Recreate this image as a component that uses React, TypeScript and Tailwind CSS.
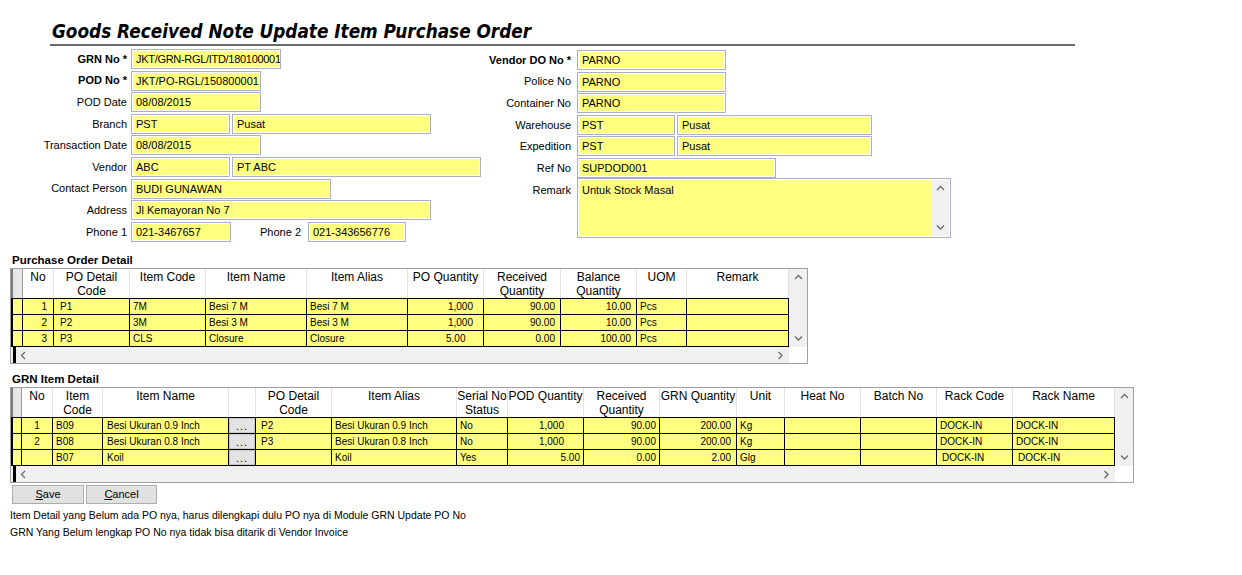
import type { ReactNode } from 'react'

type Col = { w: string; head: string[] }
type Cell = [string, string]

const L = 'text-left pl-[3px]'
const R = 'text-right pr-[5px]'
const R3 = 'text-right pr-[3px]'
const C = 'text-center'

const poCols: Col[] = [
  { w: 'w-[31px]', head: ['No'] },
  { w: 'w-[76px]', head: ['PO Detail', 'Code'] },
  { w: 'w-[76px]', head: ['Item Code'] },
  { w: 'w-[101px]', head: ['Item Name'] },
  { w: 'w-[101px]', head: ['Item Alias'] },
  { w: 'w-[76px]', head: ['PO Quantity'] },
  { w: 'w-[77px]', head: ['Received', 'Quantity'] },
  { w: 'w-[76px]', head: ['Balance', 'Quantity'] },
  { w: 'w-[50px]', head: ['UOM'] },
  { w: 'w-[102px]', head: ['Remark'] },
]

const poRows: Cell[][] = [
  [['1', 'text-right pr-[6px]'], ['P1', 'pl-[6px]'], ['7M', L], ['Besi 7 M', L], ['Besi 7 M', L], ['1,000', 'text-right pr-[10px]'], ['90.00', R], ['10.00', R], ['Pcs', L], ['', L]],
  [['2', 'text-right pr-[6px]'], ['P2', 'pl-[6px]'], ['3M', L], ['Besi 3 M', L], ['Besi 3 M', L], ['1,000', 'text-right pr-[10px]'], ['90.00', R], ['10.00', R], ['Pcs', L], ['', L]],
  [['3', 'text-right pr-[6px]'], ['P3', 'pl-[6px]'], ['CLS', L], ['Closure', L], ['Closure', L], ['5.00', 'text-left pl-[38px]'], ['0.00', R], ['100.00', R], ['Pcs', L], ['', L]],
]

const grnCols: Col[] = [
  { w: 'w-[31px]', head: ['No'] },
  { w: 'w-[50px]', head: ['Item', 'Code'] },
  { w: 'w-[126px]', head: ['Item Name'] },
  { w: 'w-[27px]', head: [''] },
  { w: 'w-[76px]', head: ['PO Detail', 'Code'] },
  { w: 'w-[125px]', head: ['Item Alias'] },
  { w: 'w-[51px]', head: ['Serial No', 'Status'] },
  { w: 'w-[76px]', head: ['POD Quantity'] },
  { w: 'w-[76px]', head: ['Received', 'Quantity'] },
  { w: 'w-[77px]', head: ['GRN Quantity'] },
  { w: 'w-[48px]', head: ['Unit'] },
  { w: 'w-[76px]', head: ['Heat No'] },
  { w: 'w-[76px]', head: ['Batch No'] },
  { w: 'w-[76px]', head: ['Rack Code'] },
  { w: 'w-[102px]', head: ['Rack Name'] },
]

const BTN = '__btn__'

const grnRows: Cell[][] = [
  [['1', C], ['B09', L], ['Besi Ukuran 0.9 Inch', 'pl-[4px]'], [BTN, ''], ['P2', 'pl-[5px]'], ['Besi Ukuran 0.9 Inch', L], ['No', L], ['1,000', 'text-right pr-[19px]'], ['90.00', R3], ['200.00', 'text-right pr-[5px]'], ['Kg', L], ['', L], ['', L], ['DOCK-IN', L], ['DOCK-IN', L]],
  [['2', C], ['B08', L], ['Besi Ukuran 0.8 Inch', 'pl-[4px]'], [BTN, ''], ['P3', 'pl-[5px]'], ['Besi Ukuran 0.8 Inch', L], ['No', L], ['1,000', 'text-right pr-[19px]'], ['90.00', R3], ['200.00', 'text-right pr-[5px]'], ['Kg', L], ['', L], ['', L], ['DOCK-IN', L], ['DOCK-IN', L]],
  [['', C], ['B07', L], ['Koil', 'pl-[4px]'], [BTN, ''], ['', L], ['Koil', L], ['Yes', L], ['5.00', R3], ['0.00', R3], ['2.00', 'text-right pr-[5px]'], ['Glg', L], ['', L], ['', L], ['DOCK-IN', 'pl-[5px]'], ['DOCK-IN', 'pl-[5px]']],
]

function Chev({ d }: { d: 'u' | 'd' | 'l' | 'r' }) {
  const pts = { u: '1,5 4.5,1.5 8,5', d: '1,1.5 4.5,5 8,1.5', l: '5,1 1.5,4.5 5,8', r: '1.5,1 5,4.5 1.5,8' }
  const vert = d === 'u' || d === 'd'
  return (
    <svg width={vert ? 9 : 7} height={vert ? 7 : 9} viewBox={vert ? '0 0 9 7' : '0 0 7 9'}>
      <polyline points={pts[d]} fill="none" stroke="#6a6a6a" strokeWidth="1.3" />
    </svg>
  )
}

function Box({ w, children, tight }: { w: string; children?: ReactNode; tight?: boolean }) {
  return (
    <div
      className={`${w} h-[20px] shrink-0 overflow-hidden whitespace-nowrap border border-[#a7b0c8] bg-[#ffff80] pl-[4px] leading-[18px] shadow-[inset_0_0_0_1px_#ffffff] ${tight ? 'tracking-[-0.3px]' : ''}`}
    >
      {children}
    </div>
  )
}

function LRow({ label, bold, children }: { label: string; bold?: boolean; children: ReactNode }) {
  return (
    <div className="flex h-[20px] items-center">
      <div className={`w-[127px] shrink-0 text-right ${bold ? 'font-bold' : ''}`}>{label}</div>
      <div className="ml-[4px] flex items-center gap-[2px]">{children}</div>
    </div>
  )
}

function RRow({ label, bold, children }: { label: string; bold?: boolean; children: ReactNode }) {
  return (
    <div className="flex h-[20px] items-center">
      <div className={`w-[90px] shrink-0 text-right ${bold ? 'font-bold' : ''}`}>{label}</div>
      <div className="ml-[6px] flex items-center gap-[2px]">{children}</div>
    </div>
  )
}

function Grid({ cols, rows, ind }: { cols: Col[]; rows: Cell[][]; ind: string }) {
  return (
    <div className="ml-[10px] w-fit border border-[#a0a0a0] bg-white">
      <div className="flex">
        <div>
          <div className="flex h-[29px]">
            <div className={`${ind} shrink-0 border-l-2 border-r border-l-[#7a7a7a] border-r-[#9a9a9a] bg-[#e6e6e6]`} />
            {cols.map((c, i) => (
              <div
                key={i}
                className={`${c.w} shrink-0 border-r border-[#e2e2e2] pt-[1px] text-center text-[12px] leading-[14px]`}
              >
                {c.head.map((l) => (
                  <div key={l}>{l}</div>
                ))}
              </div>
            ))}
          </div>
          <div className="border-b border-black">
            {rows.map((r, i) => (
              <div key={i} className="flex h-[16px] border-t border-black bg-[#ffff80] text-[10px] leading-[15px]">
                <div className={`${ind} shrink-0 border-l-2 border-r border-black`} />
                {r.map((c, j) =>
                  c[0] === BTN ? (
                    <div key={j} className={`${cols[j].w} shrink-0 border-r border-black bg-[#e3e3e3] shadow-[inset_0_0_0_1px_#c8c8c8]`}>
                      <div className="pt-[2px] text-center text-[11px] leading-[13px] tracking-[1px]">...</div>
                    </div>
                  ) : (
                    <div key={j} className={`${cols[j].w} shrink-0 overflow-hidden whitespace-nowrap border-r border-black ${c[1]}`}>
                      {c[0]}
                    </div>
                  ),
                )}
              </div>
            ))}
          </div>
        </div>
        <div className="flex w-[18px] flex-col justify-between bg-[#f0f0f0]">
          <div className="flex h-[17px] items-center justify-center">
            <Chev d="u" />
          </div>
          <div className="flex h-[17px] items-center justify-center">
            <Chev d="d" />
          </div>
        </div>
      </div>
      <div className="flex h-[16px]">
        <div className="flex flex-1 items-center bg-[#f0f0f0]">
          <div className="ml-[2px] h-full w-[3px] bg-black" />
          <div className="flex w-[14px] justify-center">
            <Chev d="l" />
          </div>
          <div className="flex-1" />
          <div className="flex w-[17px] justify-center">
            <Chev d="r" />
          </div>
        </div>
        <div className="w-[18px] bg-white" />
      </div>
    </div>
  )
}

export default function App() {
  return (
    <div className="min-h-[575px] w-[1242px] bg-white font-['Liberation_Sans',Arial,sans-serif] text-[11px] text-black">
      <div className="ml-[52px] pt-[20px]">
        <div className="h-[23px] font-['DejaVu_Sans_Condensed','DejaVu_Sans',sans-serif] text-[18.8px] font-bold italic leading-[23px] [font-stretch:condensed]">
          Goods Received Note Update Item Purchase Order
        </div>
      </div>
      <div className="ml-[50px] mt-[1px] h-[2px] w-[1025px] bg-[#6a6a6a]" />

      {/* header form */}
      <div className="flex h-[198px] pt-[3px]">
        <div className="flex w-[481px] shrink-0 flex-col gap-[1.6px]">
          <LRow label="GRN No *" bold>
            <Box w="w-[150px]" tight>
              JKT/GRN-RGL/ITD/180100001
            </Box>
          </LRow>
          <LRow label="POD No *" bold>
            <Box w="w-[130px]">JKT/PO-RGL/150800001</Box>
          </LRow>
          <LRow label="POD Date">
            <Box w="w-[130px]">08/08/2015</Box>
          </LRow>
          <LRow label="Branch">
            <Box w="w-[99px]">PST</Box>
            <Box w="w-[199px]">Pusat</Box>
          </LRow>
          <LRow label="Transaction Date">
            <Box w="w-[130px]">08/08/2015</Box>
          </LRow>
          <LRow label="Vendor">
            <Box w="w-[99px]">ABC</Box>
            <Box w="w-[249px]">PT ABC</Box>
          </LRow>
          <LRow label="Contact Person">
            <Box w="w-[200px]">BUDI GUNAWAN</Box>
          </LRow>
          <LRow label="Address">
            <Box w="w-[300px]">Jl Kemayoran No 7</Box>
          </LRow>
          <LRow label="Phone 1">
            <Box w="w-[100px]">021-3467657</Box>
            <div className="w-[68px] text-right">Phone 2</div>
            <div className="ml-[5px]">
              <Box w="w-[98px]">021-343656776</Box>
            </div>
          </LRow>
        </div>

        <div className="flex flex-col gap-[1.6px] pt-[1px]">
          <RRow label="Vendor DO No *" bold>
            <Box w="w-[149px]">PARNO</Box>
          </RRow>
          <RRow label="Police No">
            <Box w="w-[149px]">PARNO</Box>
          </RRow>
          <RRow label="Container No">
            <Box w="w-[149px]">PARNO</Box>
          </RRow>
          <RRow label="Warehouse">
            <Box w="w-[98px]">PST</Box>
            <Box w="w-[195px]">Pusat</Box>
          </RRow>
          <RRow label="Expedition">
            <Box w="w-[98px]">PST</Box>
            <Box w="w-[195px]">Pusat</Box>
          </RRow>
          <RRow label="Ref No">
            <Box w="w-[199px]">SUPDOD001</Box>
          </RRow>
          <div className="-mt-[1.6px] flex items-start">
            <div className="w-[90px] shrink-0 pt-[2px] text-right leading-[20px]">Remark</div>
            <div className="ml-[6px] flex h-[60px] w-[374px] border border-[#a7b0c8] bg-[#ffff80] shadow-[inset_0_0_0_1px_#ffffff]">
              <div className="flex-1 pl-[4px] pt-[3px] leading-[16px]">Untuk Stock Masal</div>
              <div className="my-[1px] mr-[1px] flex w-[17px] flex-col justify-between bg-[#f0f0f0] py-[5px]">
                <div className="flex justify-center">
                  <Chev d="u" />
                </div>
                <div className="flex justify-center">
                  <Chev d="d" />
                </div>
              </div>
            </div>
          </div>
        </div>
      </div>

      <div className="ml-[12px] mt-[9px] h-[15px] text-[11.5px] font-bold leading-[15px]">Purchase Order Detail</div>
      <Grid cols={poCols} rows={poRows} ind="w-[12px]" />

      <div className="ml-[12px] mt-[7px] h-[16px] text-[11.5px] font-bold leading-[16px]">GRN Item Detail</div>
      <Grid cols={grnCols} rows={grnRows} ind="w-[11px]" />

      <div className="ml-[12px] mt-[2px] flex gap-[2px]">
        <div className="h-[19px] w-[72px] border border-[#adadad] bg-[#e1e1e1] text-center leading-[17px]">
          <span className="underline">S</span>ave
        </div>
        <div className="h-[19px] w-[71px] border border-[#adadad] bg-[#e1e1e1] text-center leading-[17px]">
          <span className="underline">C</span>ancel
        </div>
      </div>

      <div className="ml-[10px] mt-[3px] text-[10.5px] leading-[17px]">
        <div>Item Detail yang Belum ada PO nya, harus dilengkapi dulu PO nya di Module GRN Update PO No</div>
        <div>GRN Yang Belum lengkap PO No nya tidak bisa ditarik di Vendor Invoice</div>
      </div>
    </div>
  )
}
